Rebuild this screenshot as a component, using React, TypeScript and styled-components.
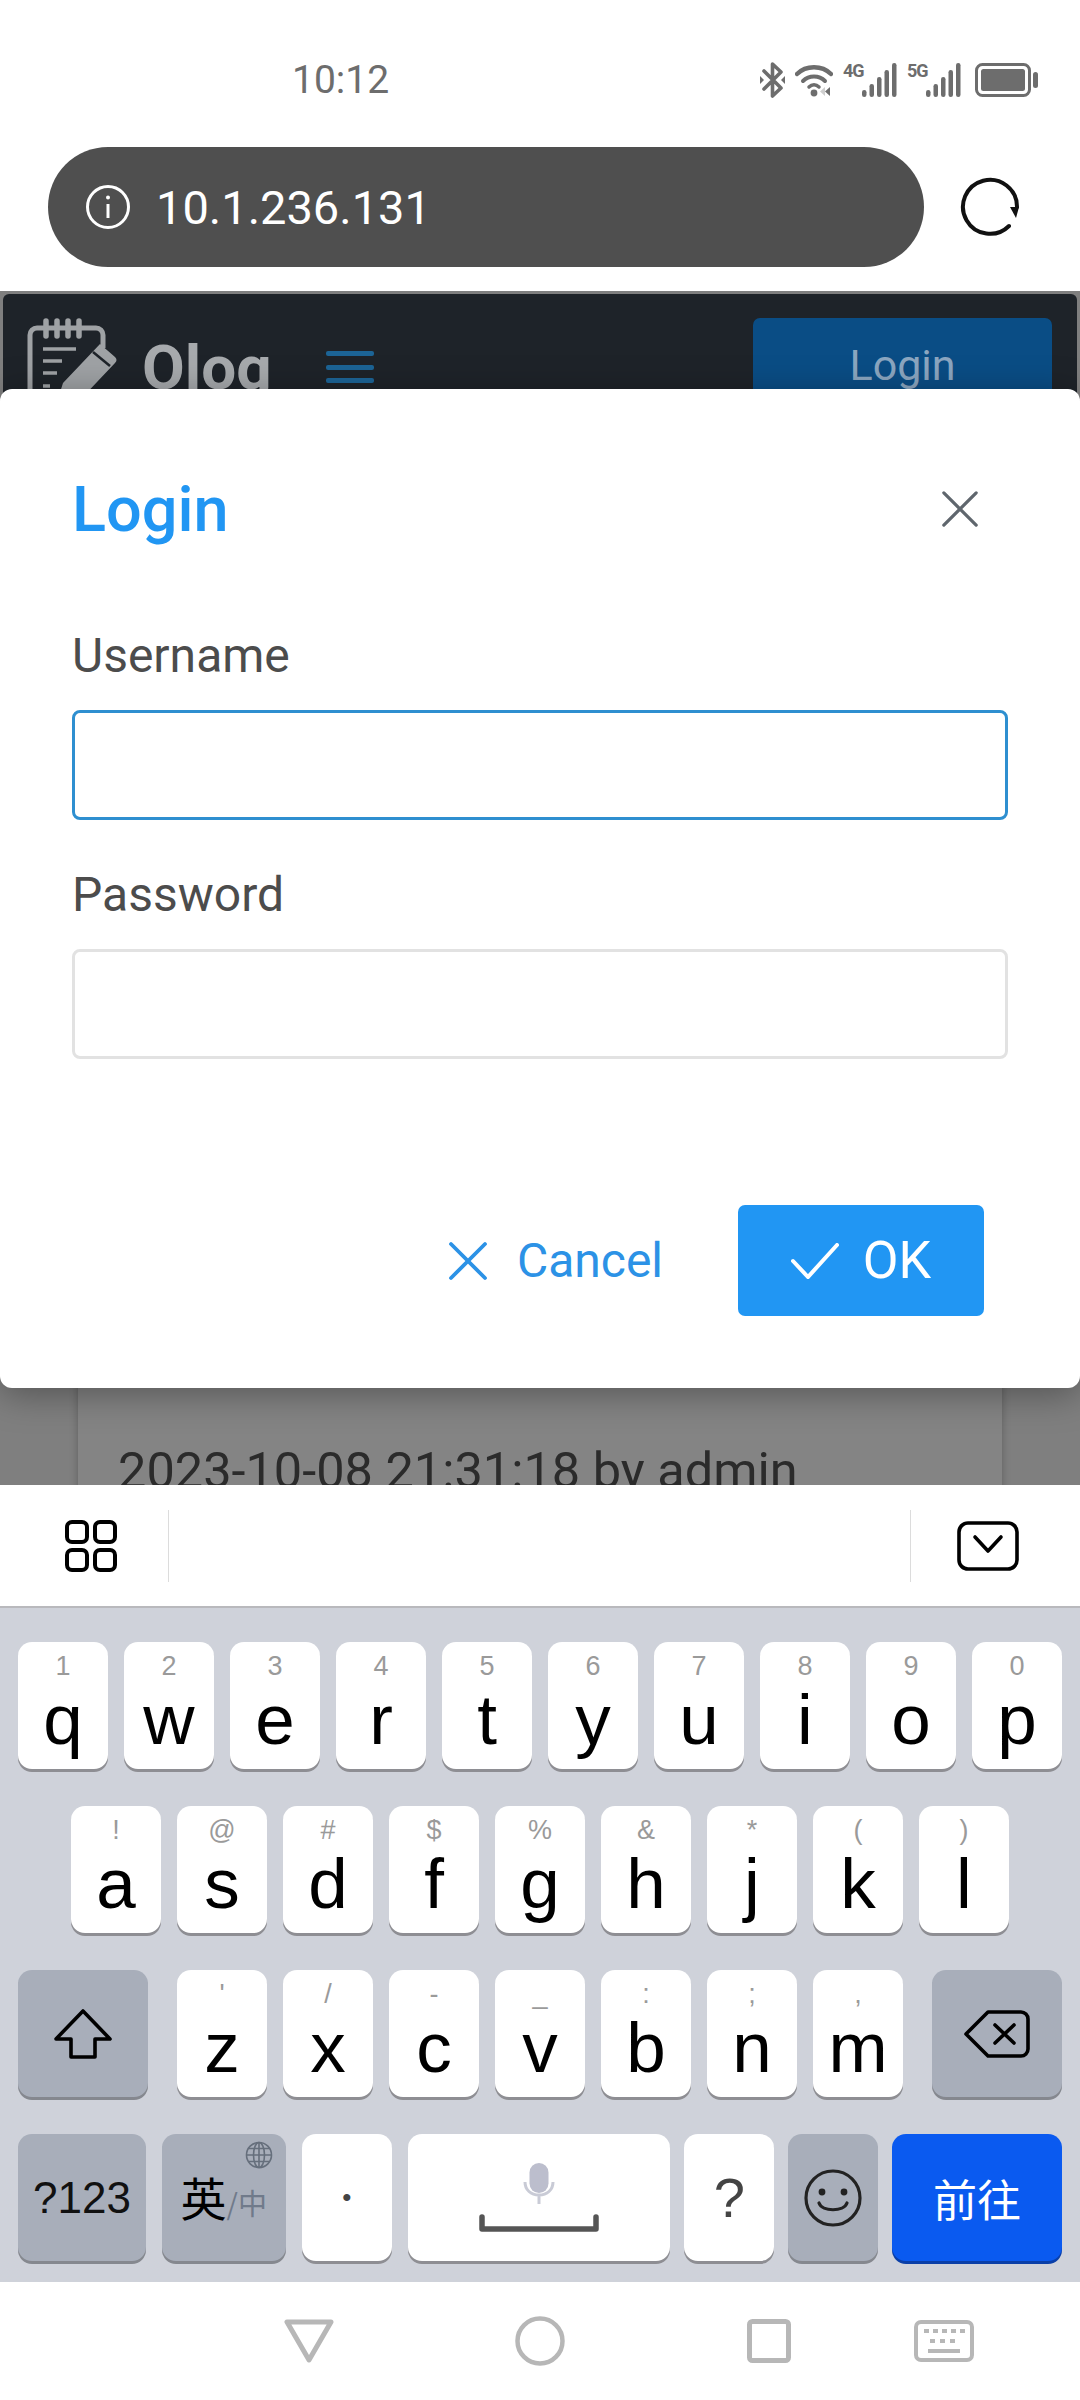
import React from "react";
import styled, { createGlobalStyle } from "styled-components";

const GlobalStyle = createGlobalStyle`
  html, body {
    margin: 0;
    padding: 0;
    background: #fff;
  }
  * {
    box-sizing: border-box;
  }
`;

const Screen = styled.div`
  width: 1080px;
  height: 2400px;
  display: flex;
  flex-direction: column;
  overflow: hidden;
  font-family: Roboto, "Liberation Sans", sans-serif;
`;

const StatusBar = styled.div`
  height: 147px;
  display: flex;
  align-items: flex-start;
  padding: 60px 42px 0 292px;
  color: #6d6d6d;
`;

const Clock = styled.div`
  font-size: 39px;
  line-height: 40px;
  flex: 1;
`;

const StatusIcons = styled.div`
  display: flex;
  align-items: flex-start;
  gap: 10px;
  padding-top: 3px;
`;

const NetLabel = styled.span`
  font-size: 18px;
  line-height: 16px;
  font-weight: 700;
  letter-spacing: -1px;
  width: 19px;
  margin-right: -10px;
`;

const BatterySlot = styled.div`
  display: flex;
  margin-left: 4px;
`;

const BluetoothSlot = styled.div`
  display: flex;
  margin-top: -1px;
`;

const AddressRow = styled.div`
  height: 144px;
  display: flex;
  align-items: flex-start;
  padding-left: 48px;
`;

const UrlBar = styled.div`
  width: 876px;
  height: 120px;
  border-radius: 60px;
  background: #4f4f4f;
  color: #fff;
  display: flex;
  align-items: center;
  gap: 26px;
  padding-left: 38px;
  font-size: 47px;
`;

const Reload = styled.div`
  margin: 30px 0 0 36px;
  display: flex;
`;

const Viewport = styled.div`
  position: relative;
  height: 1194px;
  overflow: hidden;
  background: #7f7f7f;
`;

const NavBar = styled.div`
  height: 420px;
  margin: 3px 3px 0;
  padding: 24px 25px 0 24px;
  border-radius: 6px 6px 0 0;
  background: #1e2329;
  display: flex;
  align-items: flex-start;
`;

const Brand = styled.div`
  font-size: 62px;
  line-height: 70px;
  font-weight: 700;
  color: #a7aaad;
  margin: 15px 0 0 23px;
`;

const Burger = styled.div`
  width: 48px;
  height: 32px;
  margin: 33px auto 0 54px;
  display: flex;
  flex-direction: column;
  justify-content: space-between;
`;

const BurgerLine = styled.span`
  height: 5px;
  border-radius: 2px;
  background: #1c6496;
`;

const NavLogin = styled.div`
  width: 299px;
  height: 120px;
  border-radius: 7px;
  background: #0a4d85;
  color: #8ba6c0;
  font-size: 43px;
  text-align: center;
  padding-top: 22px;
`;

const Card = styled.div`
  margin: 652px 78px 0;
  padding: 75px 40px 0;
  height: 200px;
  background: #848484;
  box-shadow: 0 0 8px rgba(0, 0, 0, 0.25);
  color: #2b2b2b;
  font-size: 50.5px;
  line-height: 60px;
  white-space: nowrap;
`;

const Modal = styled.div`
  position: absolute;
  top: 98px;
  left: 0;
  right: 0;
  height: 999px;
  padding: 0 72px;
  background: #fff;
  border-radius: 12px;
  box-shadow: 0 6px 36px rgba(0, 0, 0, 0.35);
  display: flex;
  flex-direction: column;
`;

const ModalHeader = styled.div`
  height: 240px;
  display: flex;
  align-items: center;
  justify-content: space-between;
  padding-right: 29px;
`;

const ModalTitle = styled.div`
  color: #2196f3;
  font-size: 63px;
  font-weight: 500;
`;

const FieldLabel = styled.label`
  color: #4c4c4c;
  font-size: 48px;
  line-height: 54px;
  display: block;
  margin-bottom: 27px;
`;

const Field = styled.div<{ $focused?: boolean }>`
  height: 110px;
  border-radius: 8px;
  border: ${(props) => (props.$focused ? "3px solid #2e8fd0" : "3px solid #e2e2e2")};
  margin-bottom: 48px;
`;

const ModalActions = styled.div`
  display: flex;
  justify-content: flex-end;
  align-items: center;
  margin-top: 98px;
  padding-right: 24px;
`;

const TextButton = styled.div`
  color: #2c92e6;
  font-size: 48px;
  display: flex;
  align-items: center;
  gap: 29px;
  margin-right: 75px;
`;

const PrimaryButton = styled.div`
  width: 246px;
  height: 111px;
  border-radius: 7px;
  background: #2196f3;
  color: #fff;
  font-size: 52px;
  display: flex;
  align-items: center;
  justify-content: center;
  gap: 24px;
`;

const Toolbar = styled.div`
  height: 123px;
  background: #fff;
  border-bottom: 2px solid #b9b9bd;
  display: flex;
  align-items: center;
  padding: 0 61px 0 65px;
`;

const ToolDivider = styled.div`
  width: 1px;
  height: 72px;
  background: #dcdcdc;
  margin-left: 51px;
`;

const ToolSpacer = styled.div`
  flex: 1;
`;

const ToolDividerRight = styled(ToolDivider)`
  margin: 0 46px 0 0;
`;

const Keyboard = styled.div`
  height: 674px;
  background: #cfd2da;
  padding: 34px 18px 0;
  display: flex;
  flex-direction: column;
  gap: 34px;
`;

const KeyRow = styled.div<{ $gap?: number; $inset?: number }>`
  display: flex;
  height: 130px;
  gap: ${(props) => props.$gap ?? 16}px;
  padding-left: ${(props) => props.$inset ?? 0}px;
`;

const LetterGroup = styled.div`
  display: flex;
  gap: 16px;
`;

const KeyBase = styled.div<{ $width?: number; $grey?: boolean; $pull?: boolean }>`
  position: relative;
  width: ${(props) => props.$width ?? 90}px;
  height: 127px;
  margin-left: ${(props) => (props.$pull ? "-2px" : "0")};
  border-radius: 14px;
  background: ${(props) => (props.$grey ? "#a8aeba" : "#fff")};
  box-shadow: 0 3px 0 ${(props) => (props.$grey ? "#85888f" : "#8e8e93")};
  display: flex;
  flex-direction: column;
  align-items: center;
  font-family: "Liberation Sans", Arial, sans-serif;
  color: #000;
`;

const CenterKey = styled(KeyBase)`
  justify-content: center;
`;

const KeyHint = styled.span`
  margin-top: 9px;
  height: 30px;
  font-size: 27px;
  line-height: 30px;
  color: #9a9a9a;
`;

const KeyLetter = styled.span`
  margin-top: 3px;
  font-size: 71px;
  line-height: 72px;
`;

const SymbolLabel = styled.span`
  font-size: 44px;
  color: #111;
`;

const DotLabel = styled.span`
  font-size: 26px;
  color: #444;
`;

const QuestionLabel = styled.span`
  font-size: 56px;
  color: #444;
`;

const LangLabel = styled.div`
  margin-top: 35px;
  display: flex;
  align-items: flex-end;
  font-family: "Noto Sans CJK SC", sans-serif;
  font-size: 46px;
  line-height: 54px;
  color: #000;
`;

const LangSecondary = styled.span`
  font-size: 29px;
  line-height: 42px;
  color: #707a8a;
`;

const GlobeBadge = styled.div`
  position: absolute;
  top: 7px;
  right: 13px;
  display: flex;
`;

const SpaceKey = styled(CenterKey)`
  gap: 10px;
`;

const GoKey = styled(CenterKey)`
  background: #0a5af0;
  box-shadow: 0 3px 0 #0a3fa8;
  color: #fff;
  font-family: "Noto Sans CJK SC", sans-serif;
  font-size: 44px;
`;

const SystemNav = styled.div`
  height: 118px;
  background: #fff;
  display: flex;
  align-items: center;
  padding-left: 284px;
`;

const NavSlot = styled.div<{ $gap: number }>`
  display: flex;
  margin-right: ${(props) => props.$gap}px;
`;

const digits = ["1", "2", "3", "4", "5", "6", "7", "8", "9", "0"];
const rowOne = "qwertyuiop".split("").map((l, i) => [l, digits[i]]);
const rowTwo = [["a", "!"], ["s", "@"], ["d", "#"], ["f", "$"], ["g", "%"], ["h", "&"], ["j", "*"], ["k", "("], ["l", ")"]];
const rowThree = [["z", "'"], ["x", "/"], ["c", "-"], ["v", "_"], ["b", ":"], ["n", ";"], ["m", ","]];

const LetterKey = ({ letter, hint }: { letter: string; hint: string }) => (
  <KeyBase>
    <KeyHint>{hint}</KeyHint>
    <KeyLetter>{letter}</KeyLetter>
  </KeyBase>
);

const BluetoothIcon = () => (
  <svg width="25" height="36" viewBox="0 0 25 36" fill="none">
    <path d="M4 9l17 17-8.5 8V2l8.5 8L4 27" stroke="#6d6d6d" strokeWidth="3.6" strokeLinejoin="round" strokeLinecap="round" />
    <path d="M0 14l4 4-4 4zM25 14l-4 4 4 4z" fill="#6d6d6d" />
  </svg>
);

const WifiIcon = () => (
  <svg width="38" height="34" viewBox="0 0 38 34" fill="none" stroke="#6d6d6d">
    <path d="M2 11C11 2 27 2 36 11" strokeWidth="4.5" strokeLinecap="round" />
    <path d="M8 18c6-6 16-6 22 0" strokeWidth="4" strokeLinecap="round" />
    <path d="M14 24c3-3 7-3 10 0" strokeWidth="3.5" strokeLinecap="round" />
    <circle cx="19" cy="30" r="3.4" fill="#6d6d6d" stroke="none" />
    <path d="M35 24v9l-5-4.5z" fill="#6d6d6d" stroke="none" />
    <path d="M30 24v9l-5-4.5z" fill="#cfcfcf" stroke="none" />
  </svg>
);

const SignalIcon = () => (
  <svg width="35" height="34" viewBox="0 0 35 34" fill="#6d6d6d">
    <rect x="0" y="27" width="4.5" height="7" rx="2.2" />
    <rect x="7.5" y="21" width="4.5" height="13" rx="2.2" />
    <rect x="15" y="14" width="4.5" height="20" rx="2.2" />
    <rect x="22.5" y="7" width="4.5" height="27" rx="2.2" />
    <rect x="30" y="0" width="4.5" height="34" rx="2.2" />
  </svg>
);

const BatteryIcon = () => (
  <svg width="63" height="34" viewBox="0 0 63 34" fill="none">
    <rect x="1.5" y="1.5" width="53" height="31" rx="6" stroke="#6d6d6d" strokeWidth="3" />
    <rect x="6" y="6" width="44" height="22" rx="2.5" fill="#6d6d6d" />
    <rect x="58" y="9" width="5" height="16" rx="2.5" fill="#6d6d6d" />
  </svg>
);

const InfoIcon = () => (
  <svg width="44" height="44" viewBox="0 0 44 44" fill="none" stroke="#fff" strokeWidth="3">
    <circle cx="22" cy="22" r="20.5" />
    <path d="M22 19v14" />
    <circle cx="22" cy="12.5" r="2" fill="#fff" stroke="none" />
  </svg>
);

const ReloadIcon = () => (
  <svg width="60" height="60" viewBox="0 0 60 60" fill="none">
    <path d="M49 49A27 27 0 1 1 57 30" stroke="#111" strokeWidth="4" strokeLinecap="round" />
    <path d="M50 30h9l-3 11z" fill="#111" />
  </svg>
);

const LogoIcon = () => (
  <svg width="92" height="90" viewBox="0 0 92 90" fill="none" stroke="#9fa2a5">
    <path d="M76 30V17a7 7 0 0 0-7-7H10a7 7 0 0 0-7 7v70" strokeWidth="5" />
    <path d="M19 3v15M30 3v15M41 3v15M52 3v15" strokeWidth="5.5" strokeLinecap="round" />
    <path d="M16 31h33M16 43h19M16 55h14M16 68h7" strokeWidth="3.5" />
    <path d="M73 26l15 13q3 3 0 6L52 83l-24 7 8-25z" fill="#9fa2a5" stroke="none" />
    <path d="M66 34l17 14" stroke="#1e2329" strokeWidth="2.5" />
  </svg>
);

const CloseIcon = ({ size, color, weight }: { size: number; color: string; weight: number }) => (
  <svg width={size} height={size} viewBox="0 0 40 40" fill="none" stroke={color} strokeWidth={weight} strokeLinecap="round">
    <path d="M3 3l34 34M37 3L3 37" />
  </svg>
);

const CheckIcon = () => (
  <svg width="48" height="36" viewBox="0 0 48 36" fill="none" stroke="#fff" strokeWidth="4" strokeLinecap="round">
    <path d="M2 18l15 16L46 2" />
  </svg>
);

const AppsIcon = () => (
  <svg width="52" height="52" viewBox="0 0 52 52" fill="none" stroke="#000" strokeWidth="4">
    <rect x="2" y="2" width="20" height="20" rx="5" />
    <rect x="30" y="2" width="20" height="20" rx="5" />
    <rect x="2" y="30" width="20" height="20" rx="5" />
    <rect x="30" y="30" width="20" height="20" rx="5" />
  </svg>
);

const HideKeyboardIcon = () => (
  <svg width="62" height="50" viewBox="0 0 62 50" fill="none" stroke="#000" strokeWidth="3.6">
    <rect x="2" y="2" width="58" height="46" rx="9" />
    <path d="M18 16l13 14 13-14" strokeLinecap="round" strokeLinejoin="round" />
  </svg>
);

const ShiftIcon = () => (
  <svg width="58" height="50" viewBox="0 0 58 50" fill="none" stroke="#000" strokeWidth="3.6" strokeLinejoin="round">
    <path d="M29 2l27 28H41v18H17V30H2z" />
  </svg>
);

const BackspaceIcon = () => (
  <svg width="66" height="48" viewBox="0 0 66 48" fill="none" stroke="#000" strokeWidth="3.6" strokeLinejoin="round" strokeLinecap="round">
    <path d="M2 24L24 2h33a7 7 0 0 1 7 7v30a7 7 0 0 1-7 7H24z" />
    <path d="M31 15l19 18M50 15L31 33" />
  </svg>
);

const GlobeIcon = () => (
  <svg width="28" height="28" viewBox="0 0 28 28" fill="none" stroke="#666f7c" strokeWidth="1.6">
    <circle cx="14" cy="14" r="12.5" />
    <ellipse cx="14" cy="14" rx="5.5" ry="12.5" />
    <path d="M14 1.5v25M1.5 14h25M3.5 7.5h21M3.5 20.5h21" />
  </svg>
);

const MicIcon = () => (
  <svg width="32" height="41" viewBox="0 0 32 41" fill="none">
    <rect x="6.5" y="0" width="19" height="30" rx="9.5" fill="#bcbecd" />
    <path d="M2 19c0 8 6 13 14 13s14-5 14-13M16 32v9" stroke="#c9cbd6" strokeWidth="3" />
  </svg>
);

const SpaceBarIcon = () => (
  <svg width="120" height="18" viewBox="0 0 120 18" fill="none" stroke="#555" strokeWidth="5.5" strokeLinecap="round" strokeLinejoin="round">
    <path d="M3 3v12h114V3" />
  </svg>
);

const SmileIcon = () => (
  <svg width="58" height="58" viewBox="0 0 58 58" fill="none" stroke="#222" strokeWidth="3.2">
    <circle cx="29" cy="29" r="27" />
    <circle cx="18" cy="23" r="3.4" fill="#222" stroke="none" />
    <circle cx="40" cy="23" r="3.4" fill="#222" stroke="none" />
    <path d="M15 34c3 9 25 9 28 0" strokeLinecap="round" />
  </svg>
);

const BackIcon = () => (
  <svg width="50" height="44" viewBox="0 0 50 44" fill="none" stroke="#b7b7b7" strokeWidth="5" strokeLinejoin="round">
    <path d="M3 3h44L25 41z" />
  </svg>
);

const HomeIcon = () => (
  <svg width="50" height="50" viewBox="0 0 50 50" fill="none" stroke="#b7b7b7" strokeWidth="4.5">
    <circle cx="25" cy="25" r="22.5" />
  </svg>
);

const RecentsIcon = () => (
  <svg width="44" height="44" viewBox="0 0 44 44" fill="none" stroke="#b7b7b7" strokeWidth="5">
    <rect x="2.5" y="2.5" width="39" height="39" rx="3" />
  </svg>
);

const KeyboardIcon = () => (
  <svg width="60" height="42" viewBox="0 0 60 42" fill="none" stroke="#b7b7b7">
    <rect x="2" y="2" width="56" height="38" rx="5" strokeWidth="4" />
    <path d="M10 11h5M19 11h5M28 11h5M37 11h5M46 11h5M16 21h5M26 21h5M36 21h5" strokeWidth="4" />
    <path d="M14 31h32" strokeWidth="4" />
  </svg>
);

const App: React.FC = () => {
  return (
    <Screen>
      <GlobalStyle />
      <StatusBar>
        <Clock>10:12</Clock>
        <StatusIcons>
          <BluetoothSlot>
            <BluetoothIcon />
          </BluetoothSlot>
          <WifiIcon />
          <NetLabel>4G</NetLabel>
          <SignalIcon />
          <NetLabel>5G</NetLabel>
          <SignalIcon />
          <BatterySlot>
            <BatteryIcon />
          </BatterySlot>
        </StatusIcons>
      </StatusBar>

      <AddressRow>
        <UrlBar>
          <InfoIcon />
          10.1.236.131
        </UrlBar>
        <Reload>
          <ReloadIcon />
        </Reload>
      </AddressRow>

      <Viewport>
        <NavBar>
          <LogoIcon />
          <Brand>Olog</Brand>
          <Burger>
            <BurgerLine />
            <BurgerLine />
            <BurgerLine />
          </Burger>
          <NavLogin>Login</NavLogin>
        </NavBar>
        <Card>2023-10-08 21:31:18 by admin</Card>

        <Modal>
          <ModalHeader>
            <ModalTitle>Login</ModalTitle>
            <CloseIcon size={38} color="#5f666d" weight={3.4} />
          </ModalHeader>
          <FieldLabel>Username</FieldLabel>
          <Field $focused />
          <FieldLabel>Password</FieldLabel>
          <Field />
          <ModalActions>
            <TextButton>
              <CloseIcon size={40} color="#2c92e6" weight={3.8} />
              Cancel
            </TextButton>
            <PrimaryButton>
              <CheckIcon />
              OK
            </PrimaryButton>
          </ModalActions>
        </Modal>
      </Viewport>

      <Toolbar>
        <AppsIcon />
        <ToolDivider />
        <ToolSpacer />
        <ToolDividerRight />
        <HideKeyboardIcon />
      </Toolbar>

      <Keyboard>
        <KeyRow>
          {rowOne.map(([l, h]) => (
            <LetterKey key={l} letter={l} hint={h} />
          ))}
        </KeyRow>
        <KeyRow $inset={53}>
          {rowTwo.map(([l, h]) => (
            <LetterKey key={l} letter={l} hint={h} />
          ))}
        </KeyRow>
        <KeyRow $gap={29}>
          <CenterKey $width={130} $grey>
            <ShiftIcon />
          </CenterKey>
          <LetterGroup>
            {rowThree.map(([l, h]) => (
              <LetterKey key={l} letter={l} hint={h} />
            ))}
          </LetterGroup>
          <CenterKey $width={130} $grey>
            <BackspaceIcon />
          </CenterKey>
        </KeyRow>
        <KeyRow>
          <CenterKey $width={128} $grey>
            <SymbolLabel>?123</SymbolLabel>
          </CenterKey>
          <KeyBase $width={124} $grey>
            <GlobeBadge>
              <GlobeIcon />
            </GlobeBadge>
            <LangLabel>
              英<LangSecondary>/中</LangSecondary>
            </LangLabel>
          </KeyBase>
          <CenterKey>
            <DotLabel>•</DotLabel>
          </CenterKey>
          <SpaceKey $width={263}>
            <MicIcon />
            <SpaceBarIcon />
          </SpaceKey>
          <CenterKey $pull>
            <QuestionLabel>?</QuestionLabel>
          </CenterKey>
          <CenterKey $grey $pull>
            <SmileIcon />
          </CenterKey>
          <GoKey $width={170} $pull>前往</GoKey>
        </KeyRow>
      </Keyboard>

      <SystemNav>
        <NavSlot $gap={181}>
          <BackIcon />
        </NavSlot>
        <NavSlot $gap={182}>
          <HomeIcon />
        </NavSlot>
        <NavSlot $gap={123}>
          <RecentsIcon />
        </NavSlot>
        <NavSlot $gap={0}>
          <KeyboardIcon />
        </NavSlot>
      </SystemNav>
    </Screen>
  );
};

export default App;
